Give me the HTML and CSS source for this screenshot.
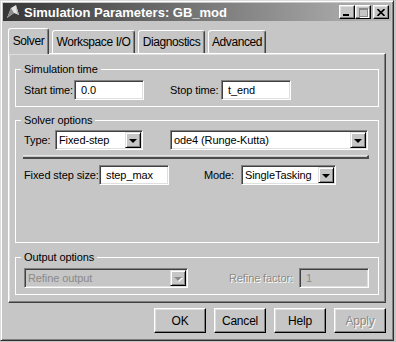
FILE: index.html
```html
<!DOCTYPE html>
<html lang="en">
<head>
    <meta charset="UTF-8">
    <title>Simulation Parameters: GB_mod</title>
    <link rel="stylesheet" href="styles.css">
</head>
<body>
    <div class="window">
        <!-- Title bar -->
        <div class="titlebar">
            <svg class="app-icon" width="16" height="16" viewBox="0 0 16 16">
                <path d="M2 14 L6 4 L11 1 L14 11 L9 9 Z" fill="#e4e4e4"/>
                <path d="M6 4 L9 9 L2 14 Z" fill="#8c8c8c"/>
                <path d="M11 1 L14 11 L12 10 Z" fill="#b0b0b0"/>
            </svg>
            <span class="title">Simulation Parameters: GB_mod</span>
            <div class="title-buttons">
                <span class="tb-btn tb-min"><i></i></span>
                <span class="tb-btn tb-max"><i></i></span>
                <span class="tb-btn tb-close">
                    <svg width="8" height="7" viewBox="0 0 8 7">
                        <path d="M0.5 0 L7.5 7 M7.5 0 L0.5 7" stroke="#000" stroke-width="1.6"/>
                    </svg>
                </span>
            </div>
        </div>

        <div class="dialog-body">
            <!-- Tabs -->
            <div class="tabs">
                <div class="tab tab-solver active">Solver</div>
                <div class="tab tab-workspace">Workspace I/O</div>
                <div class="tab tab-diagnostics">Diagnostics</div>
                <div class="tab tab-advanced">Advanced</div>
            </div>

            <div class="panel">
                <fieldset class="group">
                    <legend>Simulation time</legend>
                    <div class="row row-time">
                        <span class="lbl">Start time:</span>
                        <div class="edit">0.0</div>
                        <span class="lbl">Stop time:</span>
                        <div class="edit">t_end</div>
                    </div>
                </fieldset>

                <fieldset class="group group-solver">
                    <legend>Solver options</legend>
                    <div class="row row-type">
                        <span class="lbl">Type:</span>
                        <div class="combo combo-type">
                            <span class="combo-value">Fixed-step</span>
                            <span class="combo-arrow"></span>
                        </div>
                        <div class="combo combo-solver">
                            <span class="combo-value">ode4 (Runge-Kutta)</span>
                            <span class="combo-arrow"></span>
                        </div>
                    </div>
                    <div class="sep"></div>
                    <div class="row row-step">
                        <span class="lbl">Fixed step size:</span>
                        <div class="edit">step_max</div>
                        <span class="lbl">Mode:</span>
                        <div class="combo combo-mode">
                            <span class="combo-value">SingleTasking</span>
                            <span class="combo-arrow"></span>
                        </div>
                    </div>
                </fieldset>

                <fieldset class="group group-output">
                    <legend>Output options</legend>
                    <div class="row row-output">
                        <div class="combo disabled">
                            <span class="combo-value">Refine output</span>
                            <span class="combo-arrow"></span>
                        </div>
                        <span class="lbl lbl-disabled">Refine factor:</span>
                        <div class="edit disabled">1</div>
                    </div>
                </fieldset>
            </div>

            <!-- Dialog buttons -->
            <div class="actions">
                <button class="btn">OK</button>
                <button class="btn">Cancel</button>
                <button class="btn">Help</button>
                <button class="btn" disabled>Apply</button>
            </div>
        </div>
    </div>
</body>
</html>
```

FILE: styles.css
```css
body {
    margin: 0;
    background-color: #c6c6c6;
    font-family: "Liberation Sans", Arial, sans-serif;
    font-size: 11px;
    letter-spacing: -0.1px;
    color: #000;
}

.window {
    width: 394px;
    height: 341px;
    box-sizing: border-box;
    background-color: #c6c6c6;
    border: 1px solid;
    border-color: #dcdcdc #303030 #303030 #dcdcdc;
    box-shadow: inset 1px 1px #fff, inset -1px -1px #808080;
    padding: 2px;
    display: flex;
    flex-direction: column;
}

/* Title bar */
.titlebar {
    height: 18px;
    display: flex;
    align-items: center;
    padding: 0 2px;
    background: linear-gradient(to right, #363636, #b6b6b6);
    color: #fff;
}

.app-icon {
    margin-right: 3px;
}

.title {
    font-weight: bold;
    font-size: 13px;
    letter-spacing: 0;
}

.title-buttons {
    margin-left: auto;
    display: flex;
}

.tb-btn {
    width: 16px;
    height: 14px;
    box-sizing: border-box;
    background-color: #c6c6c6;
    border: 1px solid;
    border-color: #fff #000 #000 #fff;
    box-shadow: inset -1px -1px #808080, inset 1px 1px #dfdfdf;
    display: flex;
    align-items: center;
    justify-content: center;
}

.tb-min i {
    width: 6px;
    height: 2px;
    background-color: #000;
    margin-top: 6px;
    margin-right: 2px;
}

.tb-max i {
    width: 7px;
    height: 6px;
    border: 1px solid #8a8a8a;
    border-top-width: 2px;
    box-shadow: 1px 1px #fff;
}

.tb-close {
    margin-left: 2px;
}

/* Body */
.dialog-body {
    flex: 1;
    display: flex;
    flex-direction: column;
    padding: 7px 5px 0 5px;
}

.tabs {
    display: flex;
    align-items: flex-end;
    gap: 3px;
    height: 25px;
}

.tab {
    box-sizing: border-box;
    height: 23px;
    border: 1px solid;
    border-color: #fff #404040 transparent #fff;
    border-bottom: none;
    border-radius: 3px 3px 0 0;
    box-shadow: inset -1px 0 #808080;
    background-color: #c6c6c6;
    display: flex;
    align-items: center;
    justify-content: center;
    font-size: 12px;
    letter-spacing: -0.4px;
}

.tab.active {
    height: 26px;
    margin-bottom: -1px;
    padding-bottom: 2px;
    position: relative;
    z-index: 1;
}

.tab-solver { width: 41px; }
.tab-workspace { width: 83px; }
.tab-diagnostics { width: 67px; }
.tab-advanced { width: 58px; }

.panel {
    height: 250px;
    box-sizing: border-box;
    border: 1px solid;
    border-color: #fff #404040 #404040 #fff;
    box-shadow: inset -1px -1px #808080, inset 1px 1px #dfdfdf;
    padding: 9px 6px 7px 6px;
    display: flex;
    flex-direction: column;
}

/* Group boxes */
.group {
    margin: 0;
    min-width: 0;
    border: 1px solid #fff;
    padding: 4px 8px 6px 8px;
}

.group legend {
    line-height: 13px;
    padding: 0 3px;
    margin-left: -3px;
}

.group-solver {
    margin-top: 7px;
    padding-top: 3px;
    flex: 1;
}

.group-output {
    margin-top: 8px;
}

.row {
    display: grid;
    align-items: center;
    height: 20px;
}

.row-time { grid-template-columns: 50px 96px 51px 70px; }
.row-type { grid-template-columns: 31px 115px 198px; }
.row-step { grid-template-columns: 75px 105px 37px 95px; }
.row-output { grid-template-columns: 164px 111px 70px; }

.lbl {
    white-space: nowrap;
}

.lbl-disabled {
    text-align: right;
    padding-right: 6px;
    color: #8a8a8a;
    text-shadow: 1px 1px #fff;
}

.sep {
    margin: 5px 0 6px -1px;
    width: 344px;
    height: 1px;
    border-top: 1px solid #e4e4e4;
    border-bottom: 2px solid #4c4c4c;
    border-right: 2px solid #4c4c4c;
}

/* Edit fields and combo boxes */
.edit,
.combo {
    box-sizing: border-box;
    height: 20px;
    background-color: #fff;
    border: 1px solid;
    border-color: #808080 #fff #fff #808080;
    box-shadow: inset 1px 1px #404040, inset -1px -1px #dfdfdf;
    display: flex;
    align-items: center;
    white-space: nowrap;
}

.edit {
    width: 70px;
    padding: 0 6px;
}

.edit.disabled {
    background-color: #c6c6c6;
    color: #8a8a8a;
}

.combo {
    padding: 1px;
}

.combo-type { width: 88px; }
.combo-solver { width: 198px; }
.combo-mode { width: 95px; }

.combo-value {
    flex: 1;
    padding-left: 2px;
}

.combo-arrow {
    width: 16px;
    height: 16px;
    box-sizing: border-box;
    background-color: #c6c6c6;
    border: 1px solid;
    border-color: #dfdfdf #000 #000 #dfdfdf;
    box-shadow: inset 1px 1px #fff, inset -1px -1px #808080;
    display: flex;
    align-items: center;
    justify-content: center;
}

.combo-arrow::after {
    content: "";
    border-left: 4px solid transparent;
    border-right: 4px solid transparent;
    border-top: 4px solid #000;
    margin-top: 1px;
}

.combo.disabled {
    background-color: #c6c6c6;
    color: #8a8a8a;
}

.combo.disabled .combo-arrow::after {
    border-top-color: #8a8a8a;
    filter: drop-shadow(1px 1px 0 #fff);
}

/* Buttons */
.actions {
    display: flex;
    justify-content: flex-end;
    gap: 8px;
    margin-top: 5px;
}

.btn {
    width: 52px;
    height: 25px;
    box-sizing: border-box;
    padding: 0;
    background-color: #c6c6c6;
    border: 1px solid;
    border-color: #fff #000 #000 #fff;
    box-shadow: inset -1px -1px #808080, inset 1px 1px #dfdfdf;
    font-family: inherit;
    font-size: 12px;
    letter-spacing: -0.2px;
    color: #000;
}

.btn:disabled {
    color: #8a8a8a;
    text-shadow: 1px 1px #fff;
}
```
